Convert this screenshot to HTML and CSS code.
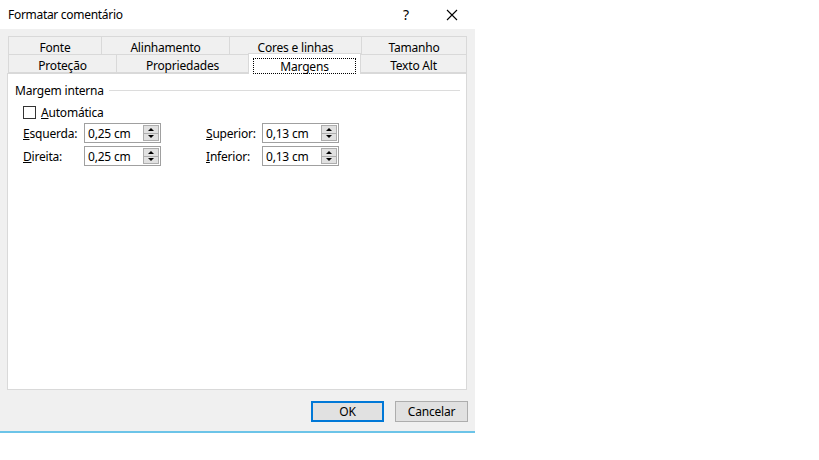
FILE: index.html
```html
<!DOCTYPE html>
<html>
<head>
<meta charset="utf-8">
<link rel="stylesheet" href="styles.css">
</head>
<body>
<div class="dialog">
  <div class="titlebar">
    <span class="title">Formatar comentário</span>
    <span class="help">?</span>
    <span class="close">
      <svg width="12" height="12" viewBox="0 0 12 12"><path d="M1 1 L11 11 M11 1 L1 11" stroke="#000" stroke-width="1.1" fill="none"/></svg>
    </span>
  </div>
  <div class="tabs">
    <div class="tabrow row1">
      <div class="tab w93">Fonte</div>
      <div class="tab w128">Alinhamento</div>
      <div class="tab w132">Cores e linhas</div>
      <div class="tab w106 last">Tamanho</div>
    </div>
    <div class="tabrow row2">
      <div class="tab w108">Proteção</div>
      <div class="tab w132">Propriedades</div>
      <div class="tab w113 selected"><span class="focus">Margens</span></div>
      <div class="tab w106 last">Texto Alt</div>
    </div>
  </div>
  <div class="panel">
    <div class="group-head"><span>Margem interna</span><div class="rule"></div></div>
    <div class="check-row">
      <span class="checkbox"></span>
      <span><u>A</u>utomática</span>
    </div>
    <div class="fields">
      <div class="field-row">
        <span class="lbl"><u>E</u>squerda:</span>
        <div class="spin"><span class="val">0,25 cm</span><span class="btns"><span class="up"></span><span class="down"></span></span></div>
        <span class="lbl lbl2"><u>S</u>uperior:</span>
        <div class="spin"><span class="val">0,13 cm</span><span class="btns"><span class="up"></span><span class="down"></span></span></div>
      </div>
      <div class="field-row">
        <span class="lbl"><u>D</u>ireita:</span>
        <div class="spin"><span class="val">0,25 cm</span><span class="btns"><span class="up"></span><span class="down"></span></span></div>
        <span class="lbl lbl2"><u>I</u>nferior:</span>
        <div class="spin"><span class="val">0,13 cm</span><span class="btns"><span class="up"></span><span class="down"></span></span></div>
      </div>
    </div>
  </div>
  <div class="buttons">
    <button class="btn ok">OK</button>
    <button class="btn">Cancelar</button>
  </div>
</div>
</body>
</html>
```
FILE: styles.css
```css
html, body {
  margin: 0;
  padding: 0;
  background: #ffffff;
}
body {
  font-family: "Noto Sans", "Liberation Sans", sans-serif;
  font-size: 12px;
  color: #000;
  letter-spacing: -0.2px;
}
.dialog {
  width: 475px;
  height: 431px;
  background: #f0f0f0;
  border-bottom: 2px solid #6cc4e8;
  box-shadow: 0 1px 0 #9a9a9a, 0 2px 0 #cfcfcf;
  display: flex;
  flex-direction: column;
}
.titlebar {
  height: 29px;
  background: #fff;
  display: flex;
  align-items: center;
  padding-left: 8px;
  font-size: 12px;
}
.title {
  flex: 1;
  letter-spacing: -0.3px;
}
.help {
  width: 46px;
  text-align: center;
  font-size: 14px;
  margin-left: 4px;
}
.close {
  width: 46px;
  display: flex;
  justify-content: center;
  padding-top: 1px;
}
.tabs {
  margin: 7px 8px 0 8px;
  position: relative;
  z-index: 1;
}
.tabrow {
  display: flex;
}
.tab {
  box-sizing: border-box;
  border: 1px solid #d9d9d9;
  border-right: none;
  text-align: center;
  background: #f0f0f0;
  height: 19px;
  padding-top: 3px;
  line-height: 15px;
}
.tab.last {
  border-right: 1px solid #d9d9d9;
}
.row2 .tab {
  border-top: none;
  height: 18px;
  padding-top: 4px;
  line-height: 14px;
}
.w93 { width: 93px; }
.w106 { width: 106px; }
.w108 { width: 108px; }
.w113 { width: 113px; }
.w128 { width: 128px; }
.w132 { width: 132px; }
.row2 .tab.selected {
  background: #fff;
  border: 1px solid #d9d9d9;
  border-bottom: none;
  height: 21px;
  margin-top: -2px;
  margin-bottom: -1px;
  padding: 4px 4px 0 4px;
  line-height: 14px;
}
.tab.selected + .tab {
  border-left: none;
}
.focus {
  display: block;
  border: 1px dotted #000;
  height: 14px;
  line-height: 15px;
}
.panel {
  box-sizing: border-box;
  margin: 0 8px 0 7px;
  height: 317px;
  background: #fff;
  border: 1px solid #d9d9d9;
  padding: 8px 6px 0 7px;
}
.group-head {
  display: flex;
  align-items: center;
  gap: 5px;
  height: 16px;
}
.rule {
  flex: 1;
  border-top: 1px solid #dcdcdc;
  margin-top: 1px;
}
.check-row {
  display: flex;
  align-items: center;
  gap: 5px;
  margin: 7px 0 0 8px;
  height: 14px;
}
.checkbox {
  box-sizing: border-box;
  width: 13px;
  height: 13px;
  border: 1px solid #333;
  background: #fff;
}
.fields {
  margin: 4px 0 0 8px;
  display: flex;
  flex-direction: column;
  gap: 3px;
}
.field-row {
  display: flex;
  align-items: center;
  height: 20px;
}
.lbl {
  width: 61px;
}
.lbl2 {
  margin-left: 45px;
  width: 56px;
}
.spin {
  box-sizing: border-box;
  width: 77px;
  height: 20px;
  border: 1px solid #a0a0a0;
  display: flex;
  align-items: center;
  padding: 1px 1px 1px 3px;
}
.val {
  flex: 1;
}
.btns {
  width: 16px;
  height: 16px;
  display: flex;
  flex-direction: column;
  box-sizing: border-box;
  border: 1px solid #adadad;
  background: #e1e1e1;
}
.up, .down {
  flex: 1;
  display: flex;
  justify-content: center;
  align-items: center;
}
.up {
  border-bottom: 1px solid #adadad;
}
.up::after {
  content: "";
  border-left: 3px solid transparent;
  border-right: 3px solid transparent;
  border-bottom: 3px solid #000;
}
.down::after {
  content: "";
  border-left: 3px solid transparent;
  border-right: 3px solid transparent;
  border-top: 3px solid #000;
}
.buttons {
  display: flex;
  justify-content: flex-end;
  gap: 11px;
  margin: 11px 7px 0 0;
}
.btn {
  box-sizing: border-box;
  width: 73px;
  height: 21px;
  background: #e1e1e1;
  border: 1px solid #adadad;
  font-family: "Noto Sans", "Liberation Sans", sans-serif;
  font-size: 12px;
  letter-spacing: -0.2px;
  padding: 0;
  color: #000;
}
.btn.ok {
  border: 2px solid #0078d7;
}
```
